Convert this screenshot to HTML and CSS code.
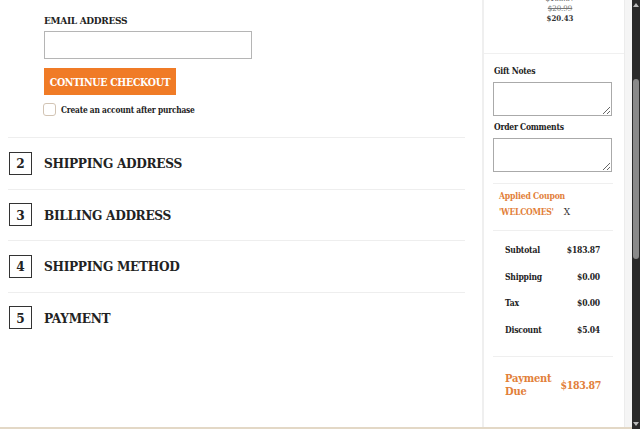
FILE: index.html
```html
<!DOCTYPE html>
<html>
<head>
<meta charset="utf-8">
<link rel="stylesheet" href="styles.css">
</head>
<body>
<div class="page">
  <div class="content">
    <div class="main">
      <div class="email-block">
        <label class="field-label">EMAIL ADDRESS</label>
        <input class="text-input" type="text">
        <button class="btn">CONTINUE CHECKOUT</button>
        <div class="check-row"><span class="checkbox"></span><span class="check-label">Create an account after purchase</span></div>
      </div>
      <div class="step"><span class="step-num">2</span><span class="step-title">SHIPPING ADDRESS</span></div>
      <div class="step"><span class="step-num">3</span><span class="step-title">BILLING ADDRESS</span></div>
      <div class="step"><span class="step-num">4</span><span class="step-title">SHIPPING METHOD</span></div>
      <div class="step"><span class="step-num">5</span><span class="step-title">PAYMENT</span></div>
    </div>
    <div class="sidebar">
      <div class="item-prices">
        <div class="cut">$183.87</div>
        <div class="old-price">$20.99</div>
        <div class="new-price">$20.43</div>
      </div>
      <div class="notes">
        <div class="side-label">Gift Notes</div>
        <textarea class="side-area"></textarea>
        <div class="side-label">Order Comments</div>
        <textarea class="side-area"></textarea>
      </div>
      <div class="coupon">
        <div class="coupon-title">Applied Coupon</div>
        <div class="coupon-row"><span class="coupon-code">'WELCOMES'</span><span class="coupon-x">X</span></div>
      </div>
      <div class="totals">
        <div class="total-row"><span>Subtotal</span><span>$183.87</span></div>
        <div class="total-row"><span>Shipping</span><span>$0.00</span></div>
        <div class="total-row"><span>Tax</span><span>$0.00</span></div>
        <div class="total-row"><span>Discount</span><span>$5.04</span></div>
      </div>
      <div class="due">
        <span class="due-label">Payment<br>Due</span>
        <span class="due-value">$183.87</span>
      </div>
    </div>
    <div class="gutter"></div>
  </div>
  <div class="scrollbar">
    <div class="arrow-up"></div>
    <div class="thumb"></div>
    <div class="arrow-down"></div>
  </div>
</div>
</body>
</html>
```
FILE: styles.css
```css
* { box-sizing: border-box; }
html, body { margin: 0; padding: 0; }
body {
  width: 640px;
  height: 429px;
  overflow: hidden;
  background: #fff;
  font-family: "DejaVu Serif Condensed", "DejaVu Serif", "Liberation Serif", serif;
  font-stretch: condensed;
  color: #222;
}
.page {
  display: flex;
  height: 429px;
}
.content {
  display: flex;
  width: 632px;
  height: 429px;
  border-bottom: 2px solid #e3d8c6;
}
.main {
  width: 482px;
  padding: 0 17px 0 8px;
}
.email-block {
  padding: 15px 0 0 36px;
  height: 137px;
  display: flex;
  flex-direction: column;
  align-items: flex-start;
}
.field-label {
  font-size: 10px;
  font-weight: bold;
  letter-spacing: -0.3px;
  line-height: 12px;
}
.text-input {
  margin-top: 4px;
  width: 208px;
  height: 28px;
  border: 1px solid #b5b5b5;
  background: #fff;
}
.btn {
  margin-top: 9px;
  width: 132px;
  height: 27px;
  border: 0;
  background: #f07b26;
  color: #fff;
  font-family: inherit;
  font-stretch: condensed;
  font-weight: bold;
  font-size: 10.5px;
  letter-spacing: -0.3px;
  white-space: nowrap;
  padding: 0;
}
.check-row {
  margin-top: 8px;
  display: flex;
  align-items: center;
  gap: 5px;
}
.checkbox {
  width: 13px;
  height: 13px;
  border: 1px solid #d2c4b4;
  border-radius: 3px;
  margin-left: -1px;
}
.check-label {
  font-size: 8.3px;
  letter-spacing: -0.2px;
  font-weight: bold;
}
.step {
  display: flex;
  align-items: center;
  gap: 12px;
  height: 51.5px;
  padding: 0 0 0 1px;
  border-top: 1.5px solid #eeeeee;
}
.step-num {
  width: 23px;
  height: 23px;
  border: 1.5px solid #333;
  display: flex;
  align-items: center;
  justify-content: center;
  font-weight: bold;
  font-size: 13.5px;
}
.step-title {
  font-weight: bold;
  font-size: 13.5px;
  letter-spacing: -0.3px;
}
.sidebar {
  width: 142px;
  border-left: 2px solid #efefef;
  display: flex;
  flex-direction: column;
}
.item-prices {
  height: 59.5px;
  flex-shrink: 0;
  border-bottom: 1.5px solid #f0f0f0;
  text-align: center;
  font-size: 7.8px;
  line-height: 10px;
  padding-left: 12px;
  margin-top: -6px;
  font-weight: bold;
}
.cut { color: #555; font-weight: normal; }
.old-price { color: #777; text-decoration: line-through; font-weight: normal; }
.new-price { color: #333; }
.notes {
  padding: 11.5px 11px 0 9px;
  display: flex;
  flex-direction: column;
}
.side-label {
  font-size: 8.5px;
  letter-spacing: -0.25px;
  font-weight: bold;
  line-height: 12px;
  margin-left: 1px;
}
.side-area {
  margin-top: 5px;
  margin-bottom: 5px;
  width: 119px;
  height: 34px;
  border: 1px solid #aaa;
  resize: vertical;
  border-radius: 0;
  padding: 0;
}
.coupon {
  margin: 6px 11px 0 9px;
  border-top: 1.5px solid #efefef;
  border-bottom: 1.5px solid #efefef;
  padding: 4.5px 0 0 6px;
  height: 47.5px;
  flex-shrink: 0;
}
.coupon-title {
  color: #e2803a;
  font-weight: bold;
  font-size: 8.6px;
  letter-spacing: -0.2px;
  line-height: 14px;
}
.coupon-row {
  display: flex;
  gap: 10px;
  align-items: center;
  line-height: 18px;
}
.coupon-code { color: #e2803a; font-weight: bold; font-size: 8.6px; letter-spacing: -0.3px; }
.coupon-x { color: #333; font-size: 10px; }
.totals {
  margin: 0 11px 0 9px;
  padding: 6.5px 13px 0 12px;
  border-bottom: 1.5px solid #efefef;
  height: 126px;
  flex-shrink: 0;
}
.total-row {
  display: flex;
  justify-content: space-between;
  height: 26.5px;
  align-items: center;
  font-weight: bold;
  font-size: 8.5px;
  letter-spacing: -0.2px;
}
.due {
  margin: 0 11px 0 9px;
  padding: 15.5px 12px 0 12px;
  display: flex;
  justify-content: space-between;
  align-items: center;
  color: #e2803a;
  font-weight: bold;
}
.due-label { font-size: 11px; letter-spacing: -0.2px; line-height: 13px; }
.due-value { font-size: 10.5px; letter-spacing: -0.3px; }
.gutter {
  width: 8px;
  background: #f5f5f5;
  border-left: 1px solid #ececec;
}
.scrollbar {
  width: 8px;
  height: 429px;
  background: #2a2a2a;
  display: flex;
  flex-direction: column;
  align-items: center;
}
.arrow-up {
  margin-top: 3px;
  width: 0; height: 0;
  border-left: 3px solid transparent;
  border-right: 3px solid transparent;
  border-bottom: 4px solid #bbb;
}
.thumb {
  margin-top: 72px;
  width: 6px;
  height: 180px;
  background: #8a8a8a;
  border-radius: 3px;
}
.arrow-down {
  margin-top: auto;
  margin-bottom: 3px;
  width: 0; height: 0;
  border-left: 3px solid transparent;
  border-right: 3px solid transparent;
  border-top: 4px solid #bbb;
}
```
